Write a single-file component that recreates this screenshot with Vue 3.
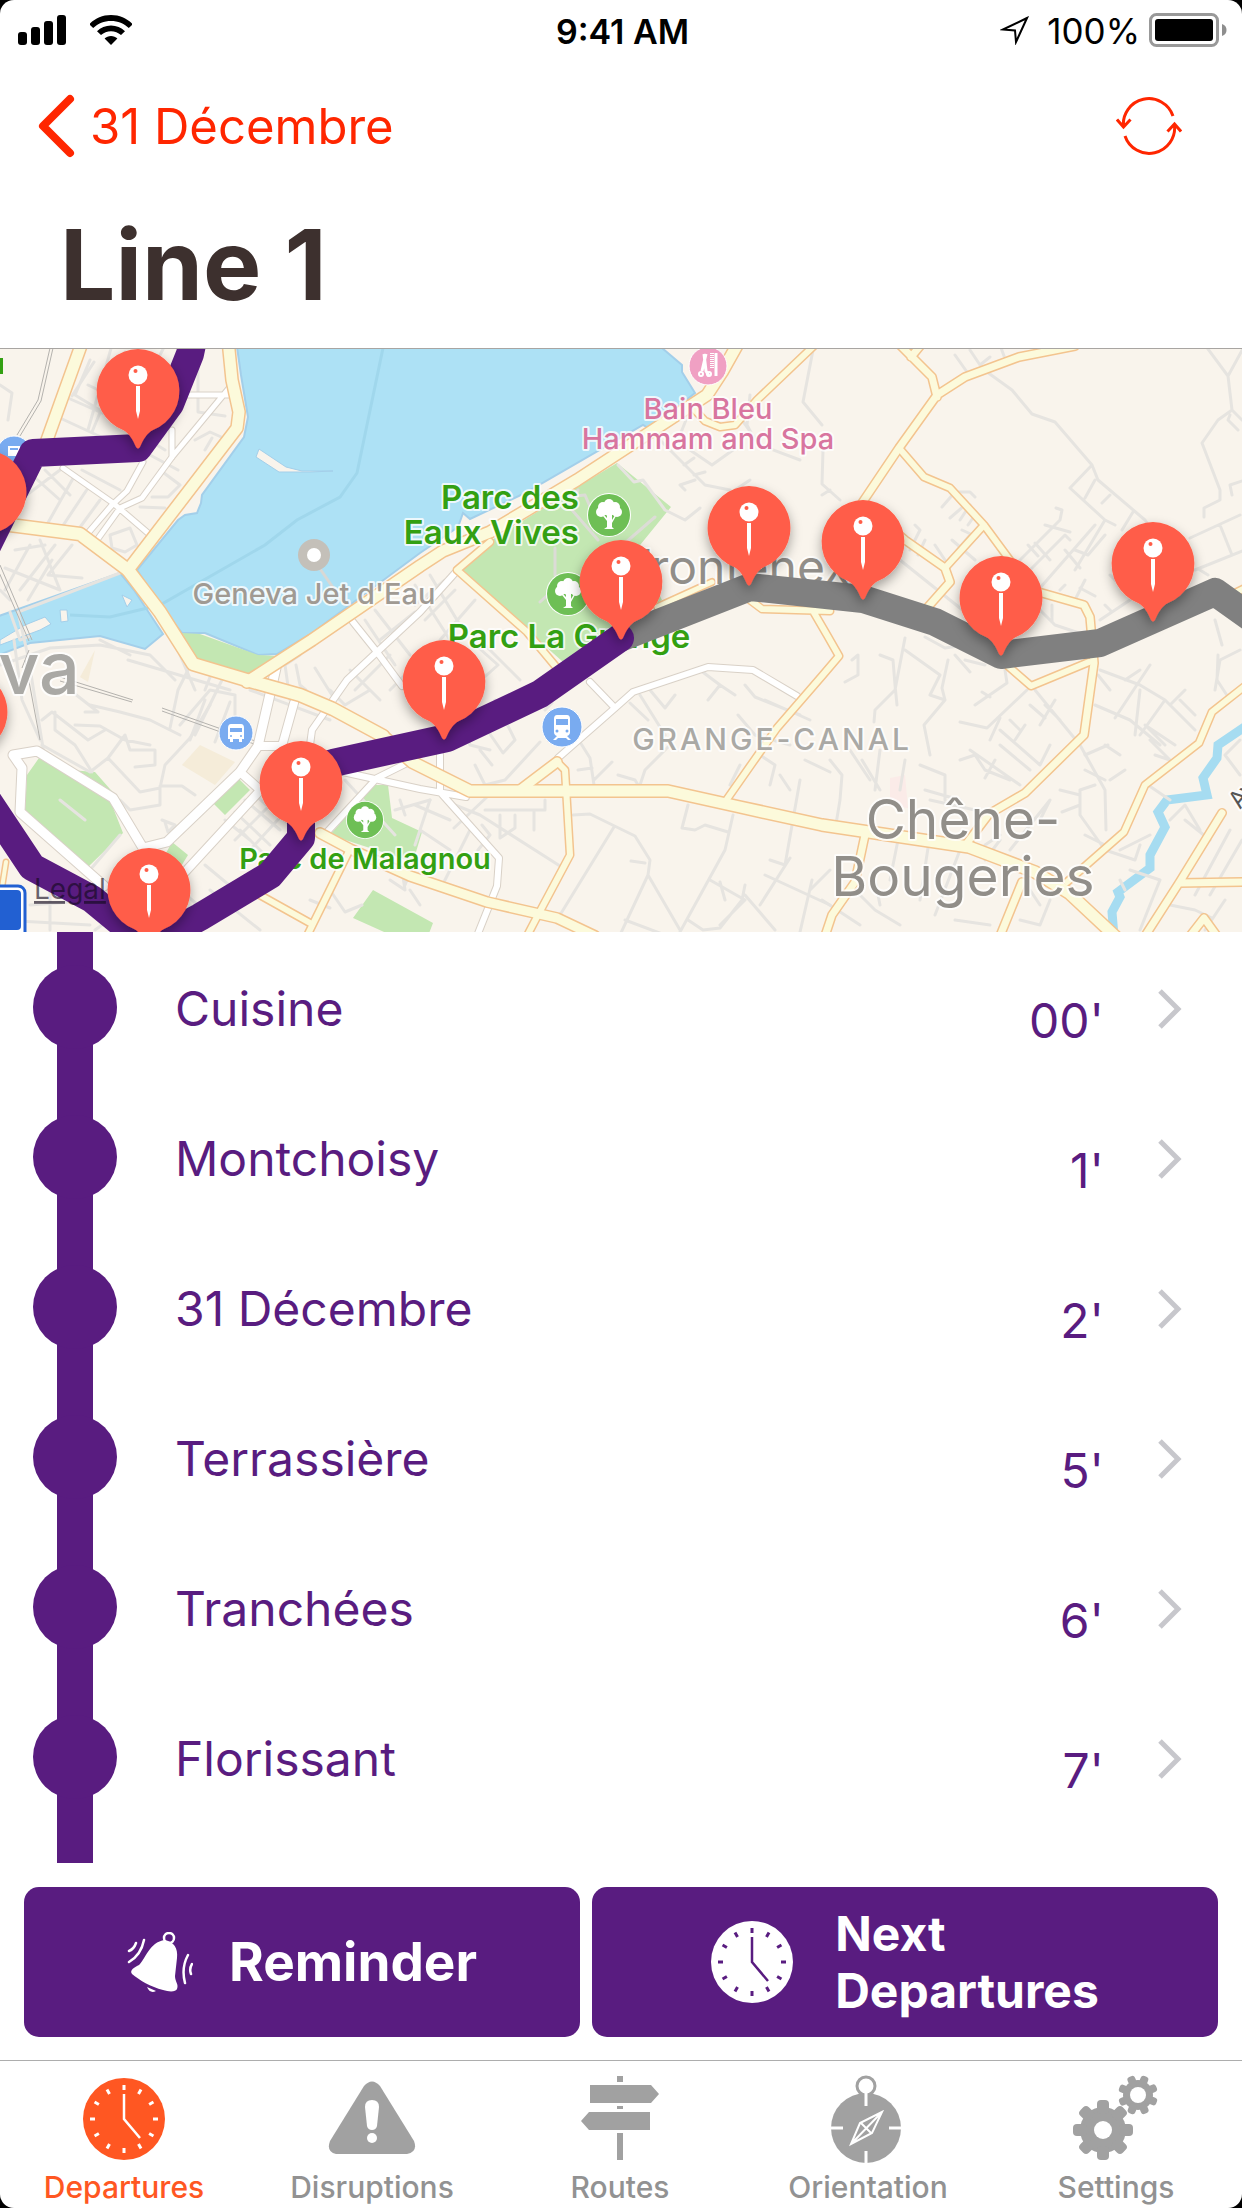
<script setup>
const stops = [
  { name: 'Cuisine', time: "00'" },
  { name: 'Montchoisy', time: "1'" },
  { name: '31 Décembre', time: "2'" },
  { name: 'Terrassière', time: "5'" },
  { name: 'Tranchées', time: "6'" },
  { name: 'Florissant', time: "7'" },
]

const pins = [
  [138, 391], [-15, 492], [-34, 712], [149, 890], [301, 783], [444, 682],
  [621, 582], [749, 528], [863, 542], [1001, 598], [1153, 564],
]

const ticks = Array.from({ length: 12 }, (_, i) => i * 30)
const teeth = Array.from({ length: 8 }, (_, i) => i * 45)

const tabs = ['Departures', 'Disruptions', 'Routes', 'Orientation', 'Settings']

// Streets are grouped by class; w is the width of the road surface.
const yellowRoads = [
  { w: 12, d: 'M228 340 232 380 239 412 237 428 128 570' },
  { w: 13, d: 'M128 570 160 612 193 664 250 681 300 695 333 709 383 736' },
  { w: 12, d: 'M383 736 412 762 470 791 668 791 740 807 822 825 969 847 1035 872 1069 893 1115 936' },
  { w: 13, d: 'M10 525 80 534 128 570' },
  { w: 12, d: 'M247 682 312 640 420 566 443 551 490 532 577 480 707 395 722 372 740 340' },
  { w: 7, d: 'M490 542 457 570 527 632 557 668' },
  { w: 7, d: 'M820 340 757 400 735 425 720 427 705 421 693 408' },
  { w: 6, d: 'M657 607 712 582' },
  { w: 7, d: 'M750 600 762 609 830 611 M813 611 827 635 839 656 822 676 777 728 753 762 725 802' },
  { w: 8, d: 'M895 340 932 377 937 397 M925 340 911 357 M1075 346 1019 357 965 377 937 395 899 448 862 503 905 540 945 568 950 582 927 608' },
  { w: 7, d: 'M899 448 924 477 950 488 984 525 1012 563 M984 525 945 568' },
  { w: 8, d: 'M1035 591 1084 605 1090 617 1094 663 1084 735 1025 793 989 814 967 843' },
  { w: 7, d: 'M1008 666 1031 686 1089 662 M1225 598 1245 588' },
  { w: 7, d: 'M1245 686 1212 712 1199 743 1145 785 1124 832 1067 882' },
  { w: 8, d: 'M1022 882 1000 936 M865 835 855 882 832 915 825 936' },
  { w: 8, d: 'M1222 813 1179 883 1145 936 M1179 883 1245 882 M1190 936 1204 918 1217 936' },
  { w: 7, d: 'M557 762 565 770 570 855 538 915 M538 915 527 936' },
  { w: 10, d: 'M557 762 520 790 M320 833 350 849 410 876 487 902 557 918 595 936' },
  { w: 7, d: 'M350 849 307 936 M258 894 310 923' },
  { w: 12, d: 'M83 340 47 440' },
  { w: 5, d: 'M6 862 0 900' },
]

const whiteRoads = [
  { w: 5, d: 'M186 395 230 395 M230 387 172 457 142 498 120 508 97 540 M143 462 127 491 112 505 88 533 M63 468 113 503 148 533 M172 430 172 457' },
  { w: 6, d: 'M353 622 377 652 402 686 M455 573 420 612 377 652 347 680 312 730 310 745' },
  { w: 9, d: 'M276 668 258 746 240 772 167 842 143 848 113 798 37 751 13 755 22 768 20 812 104 886' },
  { w: 8, d: 'M294 703 282 746 258 746 M240 772 258 788 M266 784 185 872' },
  { w: 6, d: 'M327 832 377 778 407 763 M343 772 420 789 466 797 M440 755 440 792 499 858 497 886 477 936' },
  { w: 6, d: 'M590 682 615 708 M558 758 615 708 633 692 708 667 753 670 797 696' },
]

const minorRoads = [
  // north bank
  'M90 360 75 395 165 450 M88 385 145 412 M68 398 118 420 M60 418 140 455 M94 362 72 396 M112 345 88 430 M125 352 92 432 M0 385 12 393 8 420 M165 345 155 365 M198 360 198 412 225 416 M195 440 210 432 228 440 M205 450 212 438',
  'M64 467 20 500 M75 475 45 528 M90 485 60 530 M100 500 78 530 M32 475 60 500 M45 470 70 495 M82 470 120 490 M160 470 180 485 168 497 152 497 M140 507 165 508 M150 455 178 470',
  'M110 535 130 528 137 545 125 552 112 548Z M30 545 5 590 M40 540 60 590 M15 550 45 545 M55 545 20 590 M72 545 48 575 82 578 M5 568 60 590 M0 590 10 600 M52 560 28 600',
  'M120 573 60 596 18 612 30 665 M10 612 20 640 30 636',
  // old town
  'M0 665 50 648 100 645 150 655 175 680 M100 640 130 655 M128 660 230 690 M180 655 195 690 M30 668 45 760 M14 640 22 700 40 740 M70 690 98 712 85 712 M90 705 120 712 150 720 180 735 M42 720 52 712 88 740 105 730 M55 712 55 730 75 745 92 772',
  'M75 725 100 726 125 740 150 745 M42 745 90 772 108 758 125 735 130 750 155 750 155 765 135 767 M108 758 140 792 160 788 160 805 130 810 120 800 M160 788 165 765 190 738 210 705 M160 786 182 786 195 795 M165 822 168 832 175 825 162 820',
  'M170 728 178 690 193 660 M180 725 210 690 235 695 M190 740 205 700 M215 742 230 702 M205 690 212 672 245 685 M222 680 195 735 M235 695 235 720 M290 700 285 665 300 655 M296 665 300 685 306 690 M315 668 335 700 M250 690 330 720 M60 800 85 820 M90 870 120 835',
  'M245 800 280 830 M235 812 270 845 M255 795 290 825 M240 830 265 855 M225 820 250 840 M250 850 285 812 M235 840 270 805 M180 890 210 915 M205 865 235 890 M210 890 260 930 M30 905 95 900 M50 890 50 930 M0 920 90 925',
  'M330 890 345 912 362 905 M310 900 330 908 M390 880 405 890 402 870 M405 885 415 860 M400 800 405 815 M345 780 395 835 M395 810 430 800 M130 905 95 930',
  // between the roads, centre
  'M365 620 395 665 M375 610 410 655 M350 670 380 700 M330 690 345 705 370 690 M380 640 415 612 M355 690 390 655 M390 690 410 670 M415 585 450 640 M430 575 460 625 M425 620 455 590 M440 640 475 600 M415 605 445 580',
  'M470 640 498 665 470 690 M485 645 520 680 M495 700 515 740 503 753 470 705 M462 720 470 745 490 750 M475 765 485 785 505 780 540 742 M480 750 492 765 M580 742 590 758 594 785 M578 770 592 768 M594 780 612 762 M545 710 552 703 M618 775 635 780 638 785 M640 785 645 770 670 745',
  'M455 805 480 815 560 866 M485 810 545 810 545 800 M534 810 534 830 M454 828 487 797 M415 805 450 820 M420 830 450 850 M430 800 415 845 M440 890 470 830 M482 825 490 835 478 850 M420 905 410 890 M500 815 500 838 515 828 515 815',
  'M573 815 590 814 635 836 650 860 648 875 620 935 M614 827 560 915 M631 861 645 863 M648 875 680 930 M625 920 665 935 M688 805 682 828 695 830 705 825 728 832 M733 815 725 850 680 932 M710 880 745 900 720 925 M745 895 775 930 M725 900 720 882 M742 900 745 885 M688 920 703 930 720 928 742 900',
  'M640 695 665 735 M630 703 648 720 M650 690 665 708 675 695 M700 670 720 685 708 700 M720 685 735 695 M745 685 755 697 800 715 M738 715 755 735 790 745 M765 700 810 720 M760 755 775 765 770 785 M780 775 790 790 M740 765 730 785 M805 760 830 772 M800 780 785 865 770 860 M765 875 830 905 M790 858 760 905 M830 870 810 890 M812 880 800 932',
  // under Hammam and Spa
  'M660 440 705 485 730 490 M690 450 712 465 733 450 M684 465 694 458 M695 480 680 485 685 490 M694 475 705 472 M690 410 680 435 M735 490 750 480 M618 465 634 482 643 480 665 510 685 520 700 508 M742 420 760 445 800 460 M813 350 803 402 822 425 M750 395 747 425 755 440',
  // east of the lake
  'M955 355 967 372 M970 350 980 365 990 357 M1000 345 1004 356 M987 372 1012 390 1032 414 1055 422 1092 465 1098 480 1145 520 1155 535 M1092 465 1070 488 1105 520 1090 545 1075 570 M1105 520 1115 525 M1102 503 1110 495 M1133 512 1122 530 M1085 498 1095 480',
  'M1205 345 1228 376 1232 410 1242 420 M1245 345 1228 376 M1232 410 1218 420 1202 443 1220 490 1220 500 1204 508 1204 517 M1230 415 1228 420 1238 430 M1245 480 1230 485 1232 495 M1190 538 1240 515 M1220 525 1232 555 M1195 570 1245 550 M1208 575 1200 570',
  'M942 507 955 492 970 492 975 497 M950 518 965 505 M960 520 970 505 M968 525 975 515 M962 530 977 537 M945 565 970 535 M952 540 975 560 M915 525 920 530 910 550 M925 540 918 555 M935 545 945 560 M900 560 965 612 M840 500 822 484 823 450 M822 495 830 490',
  'M1020 560 1060 520 1062 510 1056 508 M1035 543 1050 560 M1045 525 1070 532 M1028 545 1038 556 M1030 570 1065 535 1070 540 M1040 588 1095 525 M1065 550 1080 568 M1075 550 1088 555 1105 535 M1060 590 1065 585 M1075 600 1085 580 M1080 588 1095 596 M1100 620 1130 600 M1105 605 1112 612 M1040 610 1055 625 1085 635 M1052 605 1052 622 M1125 590 1110 575 M1215 620 1222 645',
  'M905 638 895 690 875 710 874 722 M905 650 940 675 930 695 M1005 670 1007 683 975 705 M982 692 990 697 M960 722 987 728 1027 690 M955 655 970 672 M965 660 985 665 M925 637 945 648 965 645 M852 660 858 655 858 675 845 682 M880 655 893 660 895 685 897 705 M930 695 945 700 M948 660 942 688 945 700 924 725 930 755',
  'M1035 690 1080 745 1105 790 1106 830 M1030 705 1045 718 M1045 705 1060 720 M1040 725 1055 700 M1000 730 1040 765 1050 745 M1000 745 1030 770 M985 770 1010 780 M960 760 975 755 985 770 M970 750 1020 785 M995 760 985 778 M1010 720 1020 730 M1015 740 1025 725 M1000 718 990 740',
  'M1100 670 1140 685 1165 700 1195 730 M1095 705 1130 720 1160 745 M1115 718 1150 665 M1140 690 1135 735 M1165 700 1140 735 M1175 745 1145 725 1165 745 M1155 755 1170 760 1150 740 M1105 745 1120 755 M1085 755 1108 745 M1125 680 1140 670 M1110 690 1098 675 M1170 705 1185 690 M1215 690 1220 660 1240 650 M1180 700 1195 715 M1218 655 1217 680 1230 700',
  'M1080 790 1080 815 1105 850 1135 860 1140 845 M1080 805 1062 812 M1080 795 1060 790 M1095 785 1080 790 M1110 780 1125 770 M1085 835 1105 845 M1120 850 1150 835 M1105 780 1085 770 M1130 870 1160 880 1140 930 M1125 890 1120 880 M1148 785 1170 800 M1170 820 1185 805 1200 830 M1185 820 1210 840 M1230 830 1195 895 M1242 840 1210 895 M1240 740 1225 755 1240 775 M1170 905 1195 910 1212 918 M1205 930 1225 900',
  'M830 760 842 775 840 800 835 830 M850 750 870 780 M862 760 880 790 M880 750 875 790 M900 790 905 760 M920 765 945 775 945 800 M925 790 960 800 M930 800 975 810 M900 830 890 880 M930 835 920 900 M960 850 935 915 M985 845 1000 835 M1000 840 985 860 M1030 890 1040 905 M1050 900 1040 925 1020 920 M955 920 990 925 M850 885 875 910 900 925 M880 905 875 880 M822 900 860 925 M1010 850 1050 800 1040 820',
]

const parkIcons = [[609, 515, 22], [568, 594, 22], [365, 820, 19]]
</script>

<template>
  <div class="app">
    <header class="top">
      <div class="status">
        <div class="status-side">
          <svg class="signal" viewBox="0 0 48 30" aria-hidden="true">
            <rect x="0" y="17" width="9" height="13" rx="3" />
            <rect x="13" y="12" width="9" height="18" rx="3" />
            <rect x="26" y="6" width="9" height="24" rx="3" />
            <rect x="39" y="0" width="9" height="30" rx="3" />
          </svg>
          <svg class="wifi" viewBox="0 0 42 30" aria-hidden="true">
            <path d="M21 0C12.500 0 5.500 3.200 0 8.500L0 10 3.200 13C8 8.600 14 6 21 6S34 8.600 38.800 13L42 10V8.500C36.500 3.200 29.500 0 21 0Z" />
            <path d="M21 10.500C15.500 10.500 10.800 12.700 7 16.200L11 20C13.800 17.600 17.200 16.200 21 16.200S28.200 17.600 31 20L35 16.200C31.200 12.700 26.500 10.500 21 10.500Z" />
            <path d="M21 21C18.500 21 16.300 22 14.600 23.600L21 30 27.400 23.600C25.700 22 23.500 21 21 21Z" />
          </svg>
        </div>
        <time class="clock-text">9:41 AM</time>
        <div class="status-side status-end">
          <svg class="locate" viewBox="0 0 30 30" aria-hidden="true">
            <path d="M27 3 3 14.500 15 15.500 16 27Z" fill="none" stroke="#000" stroke-width="2" stroke-linejoin="miter" />
          </svg>
          <span class="percent">100%</span>
          <svg class="battery" viewBox="0 0 78 34" aria-hidden="true">
            <rect x="1.500" y="1.500" width="67" height="31" rx="6" fill="none" stroke="#999" stroke-width="3" />
            <rect x="6" y="6" width="58" height="22" rx="3" />
            <path d="M73 11C76 12 77.500 14 77.500 17S76 22 73 23Z" fill="#8e8e8e" />
          </svg>
        </div>
      </div>

      <nav class="nav">
        <a href="#" class="back">
          <svg class="back-icon" viewBox="0 0 38 64" aria-hidden="true">
            <path d="M33 5 6 32 33 59" fill="none" stroke="currentColor" stroke-width="8" stroke-linecap="round" stroke-linejoin="round" />
          </svg>
          31 Décembre
        </a>
        <button type="button" class="refresh" aria-label="Refresh">
          <svg viewBox="0 0 66 66" aria-hidden="true">
            <g fill="none" stroke="currentColor" stroke-width="3">
              <path d="M57 23A25.500 25.500 0 0 0 7.500 34M1 26.500 7.500 34 14.500 26.500M9 43A25.500 25.500 0 0 0 58.500 32M51.500 38.500 58.500 31 65 38.500" />
            </g>
          </svg>
        </button>
      </nav>

      <h1 class="title">Line 1</h1>
    </header>

    <section class="map" aria-label="Map of line 1">
      <svg viewBox="0 349 1242 583" preserveAspectRatio="xMidYMid slice">
        <defs>
          <filter id="pin-shadow" x="-40%" y="-40%" width="180%" height="180%">
            <feDropShadow dx="0" dy="5" stdDeviation="6" flood-color="#000" flood-opacity="0.35" />
          </filter>
          <g id="pin">
            <path d="M0-42A42 42 0 0 1 15 39C9 42 5 49 2 56Q0 59-2 56C-5 49-9 42-15 39A42 42 0 0 1 0-42Z" fill="#ff5d48" filter="url(#pin-shadow)" />
            <circle cy="-16" r="9.500" fill="#fff" />
            <circle cx="-2.500" cy="-20" r="2" fill="#ff5d48" />
            <path d="M-2-5H2V20L0 28-2 20Z" fill="#fff" />
          </g>
          <g id="tree">
            <circle r="22" fill="#fff" />
            <circle r="21" fill="#6ebf55" />
            <g fill="#fff">
              <circle cx="-8" cy="-3" r="5" /><circle cx="8" cy="-3" r="5" />
              <circle cx="-6" cy="-8" r="5" /><circle cx="6" cy="-8" r="5" />
              <circle cx="0" cy="-11" r="5" /><circle cx="0" cy="-5" r="6" />
              <path d="M-2-2H3V12L5 14H-5L-2 12V6L-6 1-5 0-2 3ZM3 5 6 0 7 1 3 8Z" />
            </g>
          </g>
        </defs>

        <rect x="-10" y="340" width="1262" height="600" fill="#f9f4ec" />
        <g fill="#c3e7b2">
          <path d="M577 487 617 463 671 507 636 550 662 600 600 640 563 662 460 570 492 540Z" />
          <path d="M39 758 110 800 123 833 87 868 25 810 27 775ZM70 770 95 772 117 797 100 788ZM238 778 250 790 225 815 213 803ZM172 842 188 855 180 868 165 855Z" />
          <path d="M373 785 388 785 392 818 422 832 413 862 330 835ZM373 890 433 923 428 936 393 936 353 918Z" />
        </g>
        <path d="M200 745 235 762 215 785 182 765ZM95 650 88 682 80 677Z" fill="#f5ecd9" />
        <path d="M890 778 905 775 908 808 890 806Z" fill="#fbebe8" />

        <g fill="#ade1f5" stroke="#a3cfea" stroke-width="2">
          <path d="M236 340 241 375 248 417 244 437 202 495 201 503 197 513 185 515 178 520 137 570 165 612 182 633 205 633 258 655 277 654 312 633 420 553 458 527 463 513 470 519 525 493 643 425 650 429 695 393 682 372 682 365 662 348V340Z" />
          <path d="M-4 617 120 573 134 590 163 634 145 649 100 636 30 643-4 656Z" />
        </g>
        <path d="M383 348 357 473 340 497 297 520 265 545 160 605 110 617 70 615" fill="none" stroke="#a0d7ec" stroke-width="3" />
        <g fill="#f9f4ec" stroke="#a3cfea" stroke-width="1">
          <path d="M259 449 286 467 302 471H333L310 472 279 472 256 457ZM122 595 132 600 127 607ZM60 610 67 610 68 621 61 622ZM0 640 25 625 45 617 51 624 40 630 0 645Z" />
        </g>
        <path d="M182 633 200 634 258 655 277 656 247 677 197 662Z" fill="#c3e7b2" />
        <path d="M1246 726 1218 745 1217 758 1203 778 1207 795 1167 800 1158 812 1165 827 1150 855 1150 868 1118 892 1120 897 1112 912 1114 936" fill="none" stroke="#a6dcf1" stroke-width="9" />
        <path d="M314 560 345 605" stroke="#d8d8d5" stroke-width="3" />

        <g fill="none" stroke="#e6e4e0" stroke-width="3" stroke-linecap="round" stroke-linejoin="round">
          <path v-for="(d, i) in minorRoads" :key="i" :d="d" />
          <path d="M567 497 585 495 600 530 M578 490 572 510 598 540 M555 548 555 575 M540 602 555 588 M655 517 625 543 600 560" stroke="#dcdcd6" />
        </g>
        <g fill="none" stroke="#b4b2ae" stroke-width="1">
          <path d="M50 348 38 400 17 435M53 348 41 401 20 436M0 565 32 640M-2 570 29 641M60 677 133 700M60 681 132 702M162 708 258 742M162 711 257 745M25 660 40 740M29 650 22 668" />
        </g>

        <g fill="none" stroke-linejoin="round" stroke-linecap="round">
          <path v-for="(r, i) in whiteRoads" :key="'wc' + i" :d="r.d" stroke="#d9d1c7" :stroke-width="r.w + 2" />
          <path v-for="(r, i) in whiteRoads" :key="'w' + i" :d="r.d" stroke="#fff" :stroke-width="r.w" />
          <path v-for="(r, i) in yellowRoads" :key="'yc' + i" :d="r.d" stroke="#f3c48f" :stroke-width="r.w + 2" />
          <path v-for="(r, i) in yellowRoads" :key="'y' + i" :d="r.d" stroke="#fcfadb" :stroke-width="r.w - 1" />
        </g>
        <circle cx="314" cy="555" r="16" fill="#c4c0b9" />
        <circle cx="314" cy="555" r="7" fill="#fff" />

        <g fill="#79abf0" stroke="#fff" stroke-width="1">
          <circle cx="14" cy="453" r="17" /><circle cx="236" cy="733" r="17" /><circle cx="562" cy="727" r="20" />
        </g>
        <g fill="#fff">
          <path d="M8 446H20V456H8Z" />
          <path d="M231 724H241Q244 724 244 728V739H242V742H239V739H233V742H230V739H228V728Q228 724 231 724Z" />
          <path d="M557 715H567Q570 715 570 719V732Q570 735 567 736L571 740H568L566 738H558L556 740H553L557 736Q554 735 554 732V719Q554 715 557 715Z" />
        </g>
        <g fill="#79abf0">
          <path d="M230 728H242V732H230ZM556 719H568V725H556ZM10 448H18V450H10Z" />
          <circle cx="231" cy="736" r="1" /><circle cx="241" cy="736" r="1" />
          <circle cx="557" cy="731" r="1.500" /><circle cx="567" cy="731" r="1.500" />
        </g>

        <circle cx="708" cy="366" r="19" fill="#f0a0c3" stroke="#fff" stroke-width="1" />
        <g fill="none" stroke="#fff" stroke-width="2">
          <path d="M704 354 706 371 709 376M706 354 702 371" stroke-width="3" />
          <circle cx="701" cy="374" r="2" /><circle cx="709" cy="374" r="2" />
          <path d="M716 353V376" stroke-width="3" />
          <path d="M712 353V368" stroke-width="4" stroke-dasharray="1 1" />
        </g>
        <use v-for="(g, i) in parkIcons" :key="i" href="#tree" :transform="`translate(${g[0]} ${g[1]}) scale(${g[2] / 22})`" />

        <g class="halo">
          <text x="314" y="604" class="poi gray" text-anchor="middle">Geneva Jet d'Eau</text>
          <text x="708" y="419" class="poi pink" text-anchor="middle">Bain Bleu</text>
          <text x="708" y="449" class="poi pink" text-anchor="middle">Hammam and Spa</text>
          <text x="579" y="509" class="park" text-anchor="end">Parc des</text>
          <text x="579" y="544" class="park" text-anchor="end">Eaux Vives</text>
          <text x="569" y="648" class="park" text-anchor="middle">Parc La Grange</text>
          <text x="365" y="869" class="park small" text-anchor="middle">Parc de Malagnou</text>
          <text x="772" y="750" class="district" text-anchor="middle">GRANGE-CANAL</text>
          <text x="963" y="839" class="town" text-anchor="middle">Chêne-</text>
          <text x="963" y="896" class="town" text-anchor="middle">Bougeries</text>
          <text x="850" y="584" class="town near" text-anchor="end">Frontenex</text>
          <text x="80" y="694" class="city" text-anchor="end">Geneva</text>
          <text x="1240" y="810" class="street" transform="rotate(-52 1240 810)">Av</text>
        </g>
        <rect x="0" y="358" width="3" height="16" fill="#33a012" />
        <rect x="-40" y="886" width="65" height="60" rx="7" fill="#fff" stroke="#2260d2" stroke-width="3" />
        <rect x="-40" y="890" width="61" height="40" rx="4" fill="#2260d2" />

        <g fill="none" stroke-width="28" stroke-linejoin="round" stroke-linecap="round">
          <path d="M620 638 750 587 863 599 935 622 1001 655 1100 643 1215 592 1260 624" stroke="#808080" />
          <path d="M195 330 190 354 170 404 138 448 33 453-14 548-40 720-14 798 0 819 32 867 92 899 148 945 200 917 270 875 301 838 301 771 333 763 447 738 540 694 620 638" stroke="#591c80" />
        </g>
        <a href="#"><text x="34" y="899" class="legal">Legal</text></a>
        <use v-for="(p, i) in pins" :key="i" href="#pin" :x="p[0]" :y="p[1]" />
      </svg>
    </section>

    <ul class="stops">
      <li v-for="s in stops" :key="s.name">
        <a href="#" class="stop">
          <span class="dot"></span>
          <span class="stop-name">{{ s.name }}</span>
          <span class="stop-time">{{ s.time }}</span>
          <svg class="chevron" viewBox="0 0 24 40" aria-hidden="true">
            <path d="M2 2 20 20 2 38" fill="none" stroke="#c7c7cc" stroke-width="5" />
          </svg>
        </a>
      </li>
    </ul>

    <div class="actions">
      <button type="button" class="action reminder">
        <svg class="bell" viewBox="0 0 66 60" aria-hidden="true">
          <g fill="none" stroke="#fff" stroke-width="2.500" stroke-linecap="round">
            <circle cx="42" cy="6" r="5" />
            <path d="M17 8Q14 23 2 30M9 11Q7 17 2 19M61 23Q54 36 58 51M65 32Q62 37 64 42" />
          </g>
          <path d="M38 8C47 10 51 16 50 26L48 44C48 50 52 52 50 57 49 60 42 60 36 58 24 55 12 48 5 42 2 38 8 35 12 33 18 28 22 10 38 8Z" fill="#fff" />
          <path d="M20 55 29 59Q23 62 20 55Z" fill="#fff" />
        </svg>
        <span>Reminder</span>
      </button>
      <button type="button" class="action next">
        <svg class="clock" viewBox="0 0 82 82" aria-hidden="true">
          <circle cx="41" cy="41" r="41" fill="#fff" />
          <g fill="none" stroke="#591c80" stroke-width="3">
            <path v-for="t in ticks" :key="t" d="M41 7V12" :transform="`rotate(${t} 41 41)`" />
            <path d="M41 16V41L57 60" stroke-width="2.500" />
          </g>
        </svg>
        <span>Next<br>Departures</span>
      </button>
    </div>

    <nav class="tabs">
      <a v-for="(t, i) in tabs" :key="t" href="#" class="tab" :class="{ active: i === 0 }">
        <svg class="tab-icon" viewBox="0 0 90 90" aria-hidden="true">
          <template v-if="i === 0">
            <circle cx="45" cy="45" r="41" fill="currentColor" />
            <g fill="none" stroke="#fff" stroke-width="3">
              <path v-for="a in ticks" :key="a" d="M45 11V16" :transform="`rotate(${a} 45 45)`" />
              <path d="M45 20V45L61 64" stroke-width="2.500" />
            </g>
          </template>
          <template v-else-if="i === 1">
            <path d="M37 12Q45 3 53 12L87 67Q91 78 80 80H9Q-1 78 3 67Z" fill="#a1a1a1" />
            <path d="M38 33Q38 26 45 26T52 33L50 52Q49 56 45 56T40 52Z" fill="#fff" />
            <circle cx="45" cy="64" r="5" fill="#fff" />
          </template>
          <template v-else-if="i === 2">
            <path d="M42 2H48V8H42ZM15 11H76L84 20 76 29H15ZM42 32H48V35H42ZM14 38H75V56H14L6 47ZM42 59H48V86H42Z" fill="#a1a1a1" />
          </template>
          <template v-else-if="i === 3">
            <circle cx="43" cy="54" r="35" fill="#a1a1a1" />
            <circle cx="43" cy="12" r="9" fill="#fff" stroke="#a1a1a1" stroke-width="3" />
            <g fill="none" stroke="#fff" stroke-width="3">
              <path d="M43 17V32M43 77V90M7 54H20M66 54H79" />
              <path d="M59 38 37 49 28 70 49 59ZM38 49 48 59M59 38 28 70" stroke-width="2" />
            </g>
          </template>
          <template v-else>
            <g fill="#a1a1a1">
              <g transform="translate(32 56)">
                <circle r="23" />
                <rect v-for="a in teeth" :key="a" x="-6" y="-30" width="12" height="14" rx="4" :transform="`rotate(${a})`" />
              </g>
              <g transform="translate(67 21)">
                <circle r="15" />
                <rect v-for="a in teeth" :key="a" x="-4" y="-20" width="8" height="10" rx="3" :transform="`rotate(${a + 22})`" />
              </g>
            </g>
            <circle cx="32" cy="56" r="9" fill="#fff" />
            <circle cx="67" cy="21" r="8" fill="#fff" />
          </template>
        </svg>
        <span>{{ t }}</span>
      </a>
    </nav>
  </div>
</template>

<style>
body {
  margin: 0;
  background: #000;
}
</style>

<style scoped>
.app {
  display: flex;
  flex-direction: column;
  min-height: 100vh;
  overflow: hidden;
  border-radius: 14px;
  background: #fff;
  color: #591c80;
  font-family: Inter, "Liberation Sans", sans-serif;
}

a {
  color: inherit;
  text-decoration: none;
}

button {
  border: 0;
  padding: 0;
  background: none;
  color: inherit;
  font: inherit;
  cursor: pointer;
}

svg {
  display: block;
  flex: none;
}

.top {
  border-bottom: 1px solid #a8a5a2;
}

.status {
  display: flex;
  align-items: center;
  height: 60px;
  padding: 0 15px 0 18px;
  color: #000;
  font-size: 34px;
}

.status-side {
  display: flex;
  flex: 1;
  align-items: center;
}

.status-end {
  justify-content: flex-end;
}

.signal {
  width: 48px;
  height: 30px;
  margin-right: 24px;
}

.wifi {
  width: 42px;
  height: 30px;
}

.clock-text {
  padding-top: 2px;
  font-weight: 600;
}

.locate {
  width: 30px;
  height: 30px;
  margin-right: 17px;
}

.percent {
  padding-top: 2px;
  font-size: 35px;
}

.battery {
  width: 78px;
  height: 34px;
  margin-left: 9px;
}

.nav {
  display: flex;
  align-items: center;
  justify-content: space-between;
  height: 132px;
  padding: 0 60px 0 37px;
  color: #ff2600;
}

.back {
  display: flex;
  align-items: center;
  gap: 15px;
  font-size: 49px;
}

.back-icon {
  width: 38px;
  height: 64px;
}

.refresh svg {
  width: 66px;
  height: 66px;
}

.title {
  margin: 0;
  padding: 13px 60px 23px;
  color: #3d302e;
  font-size: 98px;
  font-weight: 700;
  line-height: 120px;
}

.map svg {
  width: 100%;
  height: 583px;
}

.halo text {
  paint-order: stroke;
  stroke: rgba(255, 255, 255, 0.8);
  stroke-width: 4px;
  stroke-linejoin: round;
}

.poi {
  font-size: 29px;
  font-weight: 500;
}

.gray {
  fill: #a09a93;
}

.pink {
  fill: #d8759f;
}

.park {
  fill: #33a012;
  font-size: 33px;
  font-weight: 600;
}

.park.small {
  font-size: 29px;
}

.district {
  fill: #aaa9a5;
  font-size: 30px;
  font-weight: 500;
  letter-spacing: 3px;
}

.town {
  fill: #918e89;
  font-size: 55px;
}

.town.near {
  font-size: 48px;
}

.city {
  fill: #aaa9a5;
  font-size: 72px;
  font-weight: 500;
}

.street {
  fill: #555;
  font-size: 24px;
}

.legal {
  fill: rgba(20, 10, 30, 0.65);
  font-size: 28px;
  text-decoration: underline;
}

.stops {
  flex: 1;
  margin: 0;
  padding: 0 0 31px;
  background: linear-gradient(#591c80, #591c80) 57px 0 / 36px 100% no-repeat;
  list-style: none;
}

.stop {
  display: flex;
  align-items: center;
  height: 150px;
  padding: 0 60px 0 33px;
  font-size: 48px;
}

.dot {
  width: 84px;
  height: 84px;
  border-radius: 50%;
  background: #591c80;
}

.stop-name {
  flex: 1;
  padding: 3px 0 0 58px;
}

.stop-time {
  padding: 27px 54px 0 0;
}

.chevron {
  width: 24px;
  height: 40px;
  padding-top: 3px;
}

.actions {
  display: flex;
  gap: 12px;
  padding: 24px 24px 23px;
}

.action {
  display: flex;
  align-items: center;
  justify-content: center;
  height: 150px;
  border-radius: 15px;
  background: #591c80;
  color: #fff;
  font-weight: 700;
  text-align: left;
}

.reminder {
  flex: 556;
  gap: 36px;
  font-size: 53px;
}

.next {
  flex: 626;
  gap: 42px;
  font-size: 48px;
  line-height: 57px;
}

.bell {
  width: 66px;
  height: 60px;
}

.clock {
  width: 82px;
  height: 82px;
}

.tabs {
  display: flex;
  height: 147px;
  padding-right: 2px;
  border-top: 1px solid #adadad;
}

.tab {
  display: flex;
  flex: 1;
  flex-direction: column;
  align-items: center;
  gap: 6px;
  padding-top: 13px;
  color: #929292;
  font-size: 30px;
  font-weight: 500;
  line-height: 34px;
}

.tab.active {
  color: #ff5722;
}

.tab-icon {
  width: 90px;
  height: 90px;
}
</style>
